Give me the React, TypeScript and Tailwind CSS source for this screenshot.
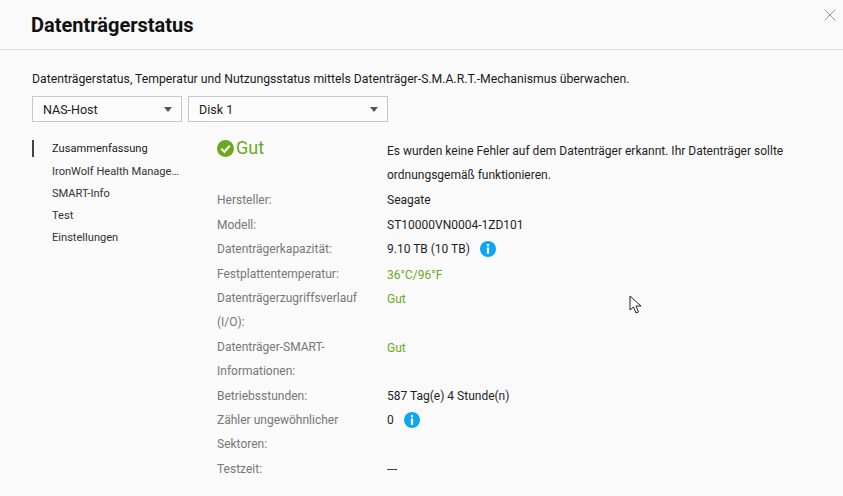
const navItems = ['Zusammenfassung', 'IronWolf Health Manage…', 'SMART-Info', 'Test', 'Einstellungen'];

function Select({ label, width }: { label: string; width: string }) {
  return (
    <div className={`${width} flex h-[26px] items-center justify-between border border-[#c8c8c8] bg-[#fcfcfc] pl-[10px] pr-[9px] text-[12.5px] text-[#1a1a1a]`}>
      <span className="pt-[2px]">{label}</span>
      <span className="h-0 w-0 border-x-[4.5px] border-t-[5px] border-x-transparent border-t-[#555]" />
    </div>
  );
}

function InfoIcon() {
  return (
    <svg width="16" height="16" viewBox="0 0 16 16" className="ml-[10px]">
      <circle cx="8" cy="8" r="8" fill="#0ea5f5" />
      <rect x="6.9" y="3" width="2.2" height="2.2" fill="#fff" />
      <rect x="6.9" y="6.4" width="2.2" height="6.4" fill="#fff" />
    </svg>
  );
}

function Row({ label, children }: { label: React.ReactNode; children?: React.ReactNode }) {
  return (
    <div className="flex leading-[24.4px]">
      <div className="w-[170px] shrink-0 text-[#777]">{label}</div>
      <div className="flex h-[24.4px] items-center text-[#1f1f1f]">{children}</div>
    </div>
  );
}

export default function App() {
  return (
    <div className="relative h-[496px] w-[843px] overflow-hidden bg-[#fafafa] font-['Roboto',sans-serif]">
      <header className="flex h-[50px] items-center border-b border-[#dedede] pl-[31px]">
        <h1 className="text-[20px] font-bold text-[#111]">Datenträgerstatus</h1>
        <svg width="12" height="12" viewBox="0 0 12 12" className="absolute right-[7px] top-[9px]">
          <path d="M0.5 0.5 L11.5 11.5 M11.5 0.5 L0.5 11.5" stroke="#999" strokeWidth="1" fill="none" />
        </svg>
      </header>

      <div className="pl-[32px] pt-[21px]">
        <p className="text-[12.22px] leading-[16px] text-[#1a1a1a]">
          Datenträgerstatus, Temperatur und Nutzungsstatus mittels Datenträger-S.M.A.R.T.-Mechanismus überwachen.
        </p>
        <div className="mt-[9px] flex gap-[6px]">
          <Select label="NAS-Host" width="w-[150px]" />
          <Select label="Disk 1" width="w-[200px]" />
        </div>

        <div className="mt-[18px] flex text-[12px]">
          <nav className="w-[185px] shrink-0 text-[11.1px]">
            {navItems.map((item, i) =>
              i === 0 ? (
                <div key={item} className="mb-[4px] flex h-[17px] items-center border-l-2 border-[#444] pl-[18px] pt-[2px] text-[#1a1a1a]">
                  {item}
                </div>
              ) : (
                <div key={item} className="flex h-[22px] items-center border-l-2 border-transparent pl-[18px] text-[#333]">
                  {item}
                </div>
              ),
            )}
          </nav>

          <div className="-mt-[2px] w-[600px]">
            <div className="flex">
              <div className="flex w-[170px] shrink-0 items-start gap-[2px] text-[#6aa91e]">
                <svg width="17" height="17" viewBox="0 0 16 16" className="mt-[2px]">
                  <circle cx="8" cy="8" r="8" fill="#6aa91e" />
                  <path d="M4 8.3 L7 11 L12 5.4" stroke="#fff" strokeWidth="2" fill="none" />
                </svg>
                <span className="text-[18px] leading-[20px]">Gut</span>
              </div>
              <p className="mt-[1px] w-[430px] text-[12px] leading-[24.4px] text-[#1f1f1f]">
                Es wurden keine Fehler auf dem Datenträger erkannt. Ihr Datenträger sollte ordnungsgemäß funktionieren.
              </p>
            </div>
            <div className="mt-[0.5px]">
              <Row label="Hersteller:">Seagate</Row>
              <Row label="Modell:">ST10000VN0004-1ZD101</Row>
              <Row label="Datenträgerkapazität:">9.10 TB (10 TB)<InfoIcon /></Row>
              <Row label="Festplattentemperatur:"><span className="pt-[2px] text-[#6aa91e]">36°C/96°F</span></Row>
              <Row label="Datenträgerzugriffsverlauf"><span className="pt-[2px] text-[#6aa91e]">Gut</span></Row>
              <Row label="(I/O):" />
              <Row label="Datenträger-SMART-"><span className="pt-[2px] text-[#6aa91e]">Gut</span></Row>
              <Row label="Informationen:" />
              <Row label="Betriebsstunden:">587 Tag(e) 4 Stunde(n)</Row>
              <Row label="Zähler ungewöhnlicher">0<InfoIcon /></Row>
              <Row label="Sektoren:" />
              <Row label="Testzeit:">---</Row>
            </div>
          </div>
        </div>
      </div>

      {/* mouse pointer caught in the capture */}
      <svg width="13" height="20" viewBox="0 0 13 20" className="absolute left-[629px] top-[295px]">
        <path d="M1 1 L1 15 L4.5 12 L7 18 L9.5 17 L7 11 L12 11 Z" fill="#fff" stroke="#222" strokeWidth="1" />
      </svg>
    </div>
  );
}
